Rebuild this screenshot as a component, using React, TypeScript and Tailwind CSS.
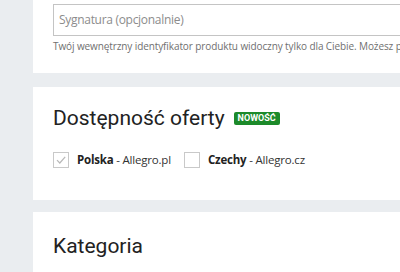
import React from 'react'

const body = { fontFamily: '"Open Sans", "Liberation Sans", sans-serif' }
const head = { fontFamily: 'Roboto, "Liberation Sans", sans-serif' }

function Checkbox({ checked }: { checked?: boolean }) {
  return (
    <span className="flex h-4 w-4 shrink-0 items-center justify-center border border-[#c9c9c9] bg-white">
      {checked && (
        <svg width="12" height="12" viewBox="0 0 12 12" fill="none">
          <path d="M2 6.2 L4.8 9 L10.2 2.8" stroke="#b8b8b8" strokeWidth="1.2" />
        </svg>
      )}
    </span>
  )
}

export default function App() {
  return (
    <div className="h-[272px] w-[400px] overflow-hidden bg-[#eaedf0] pl-[33px]" style={body}>
      <section className="bg-white pl-5 pt-1 pb-[19px]">
        <div className="flex h-8 items-center border border-r-0 border-[#c4c4c4] px-[5px] text-[12px] tracking-[-0.3px] text-[#8c8c8c]">
          Sygnatura (opcjonalnie)
        </div>
        <p className="mt-[2px] whitespace-nowrap text-[10px] leading-[16px] tracking-[-0.1px] text-[#6f6f6f]">
          Twój wewnętrzny identyfikator produktu widoczny tylko dla Ciebie. Możesz podać np. kod
        </p>
      </section>

      <section className="mt-[14px] h-[113px] bg-white pl-5 pt-[17px]">
        <div className="flex items-center gap-[9px]">
          <h2 className="text-[21px] leading-[28px] text-[#222]" style={head}>
            Dostępność oferty
          </h2>
          <span
            className="mt-[1px] rounded-[2px] bg-[#1c8a2a] px-[4px] text-[9px] font-bold leading-[13px] text-white"
            style={head}
          >
            NOWOŚĆ
          </span>
        </div>
        <div className="mt-[19px] flex items-center text-[11.5px] tracking-[-0.2px] text-[#333]">
          <Checkbox checked />
          <span className="ml-2">
            <b className="font-bold text-[#222]">Polska</b> - Allegro.pl
          </span>
          <span className="ml-[13px]">
            <Checkbox />
          </span>
          <span className="ml-2">
            <b className="font-bold text-[#222]">Czechy</b> - Allegro.cz
          </span>
        </div>
      </section>

      <section className="mt-3 h-[80px] bg-white pl-5 pt-5">
        <h2 className="text-[21px] leading-[28px] text-[#222]" style={head}>
          Kategoria
        </h2>
      </section>
    </div>
  )
}
